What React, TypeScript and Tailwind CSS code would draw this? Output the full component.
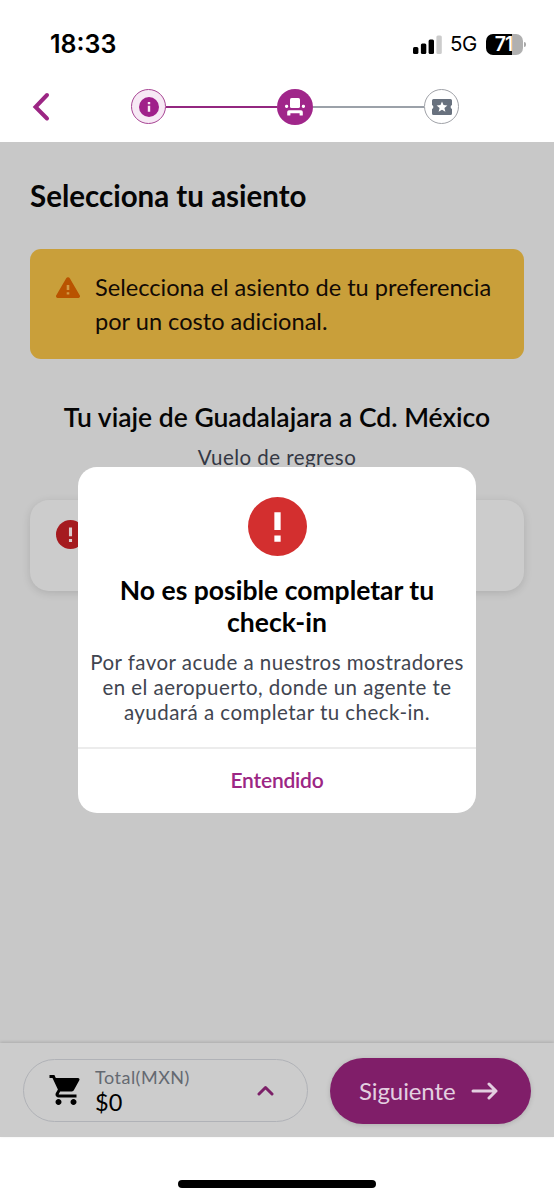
import { MdShoppingCart } from "react-icons/md"

function StatusBar() {
  return (
    <div className="flex h-[88px] items-center justify-between pr-[28px] pl-[50px]">
      <span className="font-['Inter'] text-[25px] leading-none font-semibold text-black">
        18:33
      </span>
      <div className="flex items-center">
        <svg width="29" height="19" viewBox="0 0 29 19">
          <rect x="0" y="12" width="5.4" height="7" rx="1.5" />
          <rect x="7.9" y="8.5" width="5.4" height="10.5" rx="1.5" />
          <rect x="15.6" y="4.5" width="5.4" height="14.5" rx="1.5" />
          <rect x="23.4" y="0.5" width="5.4" height="18.5" rx="1.5" fill="#cccccc" />
        </svg>
        <span className="ml-[8px] w-[28px] font-['Inter'] text-[20.5px] leading-none tracking-[-0.4px] text-black">
          5G
        </span>
        <div className="ml-[8px] flex h-[21px] w-[37px] items-center justify-center rounded-[7px] bg-[linear-gradient(to_right,#000_71%,#b0b0b0_71%)] pt-[1px] pr-[2px] font-['Inter'] text-[19.5px] leading-none font-semibold tracking-[-1px] text-white">
          71
        </div>
        <div className="ml-[1px] h-[5px] w-[2px] rounded-r-full bg-[#a8a8a8]" />
      </div>
    </div>
  )
}

function Stepper() {
  return (
    <div className="flex h-[37px] items-center pl-[32px]">
      <svg width="18" height="30" viewBox="0 0 18 30" fill="none" stroke="#9c2684" strokeWidth="4" strokeLinecap="round" strokeLinejoin="miter">
        <path d="M15 3 3.500 15 15 26.500" />
      </svg>
      <div className="ml-[81px] flex size-[35px] items-center justify-center rounded-full border border-[#a84594] bg-[#f7e9f5]">
        <svg width="20" height="20" viewBox="0 0 20 20">
          <circle cx="10" cy="10" r="10" fill="#a0208a" />
          <path fill="#f7e9f5" d="M8.800 5h2.400v2.200H8.800zM8.800 8.800h2.400v6H8.800z" />
        </svg>
      </div>
      <div className="h-[2px] w-[111px] bg-[#932780]" />
      <div className="flex size-[36px] items-center justify-center rounded-full bg-[#a0268a]">
        <svg width="20" height="18" viewBox="0 0 20 18" fill="#fff">
          <rect x="5" y="0" width="10" height="10" rx="1.6" />
          <rect x="0" y="6.8" width="3.2" height="3.2" rx="1.4" />
          <rect x="16.8" y="6.8" width="3.2" height="3.2" rx="1.4" />
          <path d="M4 12.200h12a1.800 1.800 0 0 1 1.800 1.800v3a.6.6 0 0 1-.6.6h-2a.6.6 0 0 1-.6-.6v-1.700H5.400V17a.6.6 0 0 1-.6.6h-2a.6.6 0 0 1-.6-.6v-3A1.800 1.800 0 0 1 4 12.200z" />
        </svg>
      </div>
      <div className="h-[2px] w-[111px] bg-[#9ba1a9]" />
      <div className="flex size-[35px] items-center justify-center rounded-full border border-[#a0a2a8] bg-white">
        <svg width="20" height="16" viewBox="0 0 20 16">
          <path
            fill="#68717e"
            d="M1.500 0h17A1.500 1.500 0 0 1 20 1.500v4.600a2 2 0 0 0 0 3.800v4.600a1.500 1.500 0 0 1-1.500 1.500h-17A1.500 1.500 0 0 1 0 14.500V9.900a2 2 0 0 0 0-3.800V1.500A1.500 1.500 0 0 1 1.500 0z"
          />
          <path
            fill="#fff"
            d="M10 2.400l1.500 3.700 3.900.3-3 2.500 1 3.900L10 10.700l-3.400 2.100 1-3.900-3-2.500 3.900-.3z"
          />
        </svg>
      </div>
    </div>
  )
}

function ErrorIcon({ className }: { className: string }) {
  return (
    <svg viewBox="0 0 60 60" className={className}>
      <circle cx="30" cy="30" r="30" fill="currentColor" />
      <path className="fill-(--mark)" d="M26.800 15.500h6.400v18h-6.400zM26.800 39.200h6.400v6.400h-6.400z" />
    </svg>
  )
}

function ErrorModal() {
  return (
    <div className="absolute inset-0 flex items-center justify-center">
      <div className="flex h-[346px] w-[398px] flex-col items-center overflow-hidden rounded-[19px] bg-white pt-[30px] text-center">
        <ErrorIcon className="size-[59px] text-[#d32f2f] [--mark:#fff]" />
        <h2 className="mt-[18px] text-[26.5px] leading-[32px] font-bold whitespace-nowrap text-black">
          No es posible completar tu
          <br />
          check-in
        </h2>
        <p className="mt-[12px] text-[20.5px] leading-[25px] tracking-[0.46px] whitespace-nowrap text-[#414550]">
          Por favor acude a nuestros mostradores
          <br />
          en el aeropuerto, donde un agente te
          <br />
          ayudará a completar tu check-in.
        </p>
        <button className="mt-[22px] w-full flex-1 border-t-2 border-[#ececec] pb-[2px] text-[21px] font-semibold tracking-[-0.2px] text-[#9c2684]">
          Entendido
        </button>
      </div>
    </div>
  )
}

export default function App() {
  return (
    <div className="flex h-[1200px] w-[554px] flex-col overflow-hidden bg-white font-['Lato',sans-serif]">
      <header className="h-[142px]">
        <StatusBar />
        <Stepper />
      </header>

      <div className="relative flex h-[995px] flex-col bg-[#c8c8c8]">
        <main className="flex-1 px-[30px] pt-[36px]">
          <h1 className="text-[29.5px] leading-[36px] font-bold whitespace-nowrap text-[#050505]">
            Selecciona tu asiento
          </h1>
          <div className="mt-[35px] flex h-[110px] rounded-[11px] bg-[#c99f3a] pt-[21px] pl-[26px]">
            <svg className="mt-[7px] shrink-0" width="24" height="21" viewBox="0 0 24 21">
              <path
                fill="#b95300"
                d="M10.200 1.200a2.100 2.100 0 0 1 3.600 0l9.900 17a1.800 1.800 0 0 1-1.600 2.800H1.900a1.800 1.800 0 0 1-1.600-2.800z"
              />
              <path fill="#d29a45" d="M10.700 8h2.600v5h-2.600zM10.700 15.200h2.600v2.400h-2.600z" />
            </svg>
            <p className="ml-[15px] text-[23.6px] leading-[34px] whitespace-nowrap text-[#120a05]">
              Selecciona el asiento de tu preferencia
              <br />
              por un costo adicional.
            </p>
          </div>
          <h2 className="mt-[41px] text-center text-[26.5px] leading-[34px] font-semibold whitespace-nowrap text-[#050505]">
            Tu viaje de Guadalajara a Cd. México
          </h2>
          <p className="mt-[10px] text-center text-[20.5px] leading-[26px] tracking-[0.45px] text-[#343844]">
            Vuelo de regreso
          </p>
          <div className="mt-[30px] h-[91px] rounded-[19px] bg-[#cccccc] pt-[20px] pl-[26px] shadow-[0_2px_9px_rgba(0,0,0,0.13)]">
            <ErrorIcon className="size-[29px] text-[#a51b1f] [--mark:#dccccc]" />
          </div>
        </main>

        <footer className="flex h-[94px] items-center bg-[#cccccc] pl-[23px] shadow-[0_-1px_3px_rgba(0,0,0,0.14)]">
          <div className="flex h-[63px] w-[285px] items-center rounded-full border-[1.5px] border-[#b0b2b7] pl-[24px]">
            <MdShoppingCart className="size-[36px] shrink-0 text-black" />
            <div className="ml-[11px] pb-[1px] text-[18px] leading-[24px] tracking-[0.5px] text-[#646971]">
              Total(MXN)
              <div className="text-[23.5px] leading-[26px] tracking-normal text-black">$0</div>
            </div>
            <svg className="mr-[33px] ml-auto" width="17" height="11" viewBox="0 0 17 11" fill="none" stroke="#7c2068" strokeWidth="3" strokeLinecap="round" strokeLinejoin="round">
              <path d="M2 9l6.500-6.500L15 9" />
            </svg>
          </div>
          <button className="mt-[1px] ml-[22px] flex h-[66px] w-[201px] items-center rounded-full bg-[#801e69] pl-[29px] text-[24px] tracking-[-0.1px] text-[#e3cfe0] shadow-[0_1px_5px_rgba(0,0,0,0.15)]">
            Siguiente
            <svg className="ml-[15px]" width="27" height="18" viewBox="0 0 27 18" fill="none" stroke="currentColor" strokeWidth="3" strokeLinecap="round" strokeLinejoin="round">
              <path d="M2 9h23M18 2l7 7-7 7" />
            </svg>
          </button>
        </footer>

        <ErrorModal />
      </div>

      <div className="flex flex-1 justify-center pt-[43px]">
        <div className="h-[8px] w-[198px] rounded-full bg-black" />
      </div>
    </div>
  )
}
